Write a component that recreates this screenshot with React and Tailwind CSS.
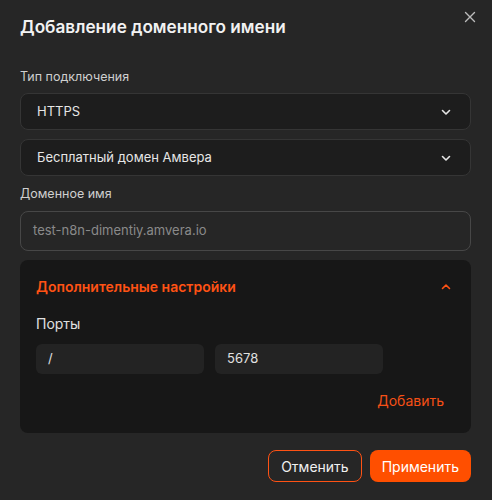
import React from "react";

const Chevron = ({ up, className }) => (
  <svg width="12" height="12" viewBox="0 0 12 12" className={className} fill="none">
    <path d={up ? "M2.5 7.5L6 4L9.5 7.5" : "M2.5 4.5L6 8L9.5 4.5"} stroke="currentColor" strokeWidth="1.6" strokeLinecap="round" strokeLinejoin="round" />
  </svg>
);

export default function App() {
  return (
    <div className="w-[492px] h-[500px] bg-[#262626] text-white relative" style={{ fontFamily: "Inter, 'Noto Sans', sans-serif" }}>
      <button className="absolute right-[16px] top-[11px] text-[#bbbbbb]">
        <svg width="12" height="12" viewBox="0 0 12 12" fill="none">
          <path d="M1.5 1.5L10.5 10.5M10.5 1.5L1.5 10.5" stroke="currentColor" strokeWidth="1.4" strokeLinecap="round" />
        </svg>
      </button>
      <div className="px-[20px] pt-[14px] pr-[21px]">
        <h1 className="text-[17.2px] font-semibold leading-[26px] text-[#f2f2f2]">Добавление доменного имени</h1>
        <div className="mt-[29px] text-[12.5px] leading-[16px] text-[#cfcfcf]">Тип подключения</div>
        <div className="mt-[8px] h-[37px] rounded-[8px] border border-[#353535] bg-[#1d1d1d] flex items-center justify-between pl-[16px] pr-[18px]">
          <span className="text-[13px] text-[#e6e6e6]">HTTPS</span>
          <Chevron className="text-[#e6e6e6]" />
        </div>
        <div className="mt-[9px] h-[37px] rounded-[8px] border border-[#353535] bg-[#1d1d1d] flex items-center justify-between pl-[16px] pr-[18px]">
          <span className="text-[13px] text-[#e6e6e6]">Бесплатный домен Амвера</span>
          <Chevron className="text-[#e6e6e6]" />
        </div>
        <div className="mt-[10px] text-[12.5px] leading-[16px] text-[#cfcfcf]">Доменное имя</div>
        <div className="mt-[9px] h-[40px] rounded-[8px] border border-[#474747] flex items-center pl-[12px]">
          <span className="text-[13px] text-[#8a8a8a]">test-n8n-dimentiy.amvera.io</span>
        </div>
        <div className="mt-[9px] rounded-[8px] bg-[#171717] px-[16px] pt-[16px] pb-[22px]">
          <div className="flex items-center justify-between pr-[3px]">
            <span className="text-[14px] font-semibold text-[#ff5214]">Дополнительные настройки</span>
            <Chevron up className="text-[#ff5214]" />
          </div>
          <div className="mt-[18px] text-[14px] leading-[18px] text-[#e0e0e0]">Порты</div>
          <div className="mt-[11px] flex gap-[11px]">
            <div className="w-[168px] h-[30px] rounded-[6px] bg-[#232323] flex items-center pl-[12px] text-[13px] text-[#e0e0e0]">/</div>
            <div className="w-[168px] h-[30px] rounded-[6px] bg-[#232323] flex items-center pl-[12px] text-[13px] text-[#e0e0e0]">5678</div>
          </div>
          <div className="mt-[16px] flex justify-end pr-[11px]">
            <span className="text-[14px] text-[#f55016]">Добавить</span>
          </div>
        </div>
        <div className="mt-[17px] flex justify-end gap-[8px]">
          <button className="h-[32px] px-[12px] rounded-[8px] border border-[#ff5214] text-[14px] text-[#f0f0f0]">Отменить</button>
          <button className="h-[32px] px-[12px] rounded-[8px] bg-[#ff4f00] text-[14px] text-white">Применить</button>
        </div>
      </div>
    </div>
  );
}
